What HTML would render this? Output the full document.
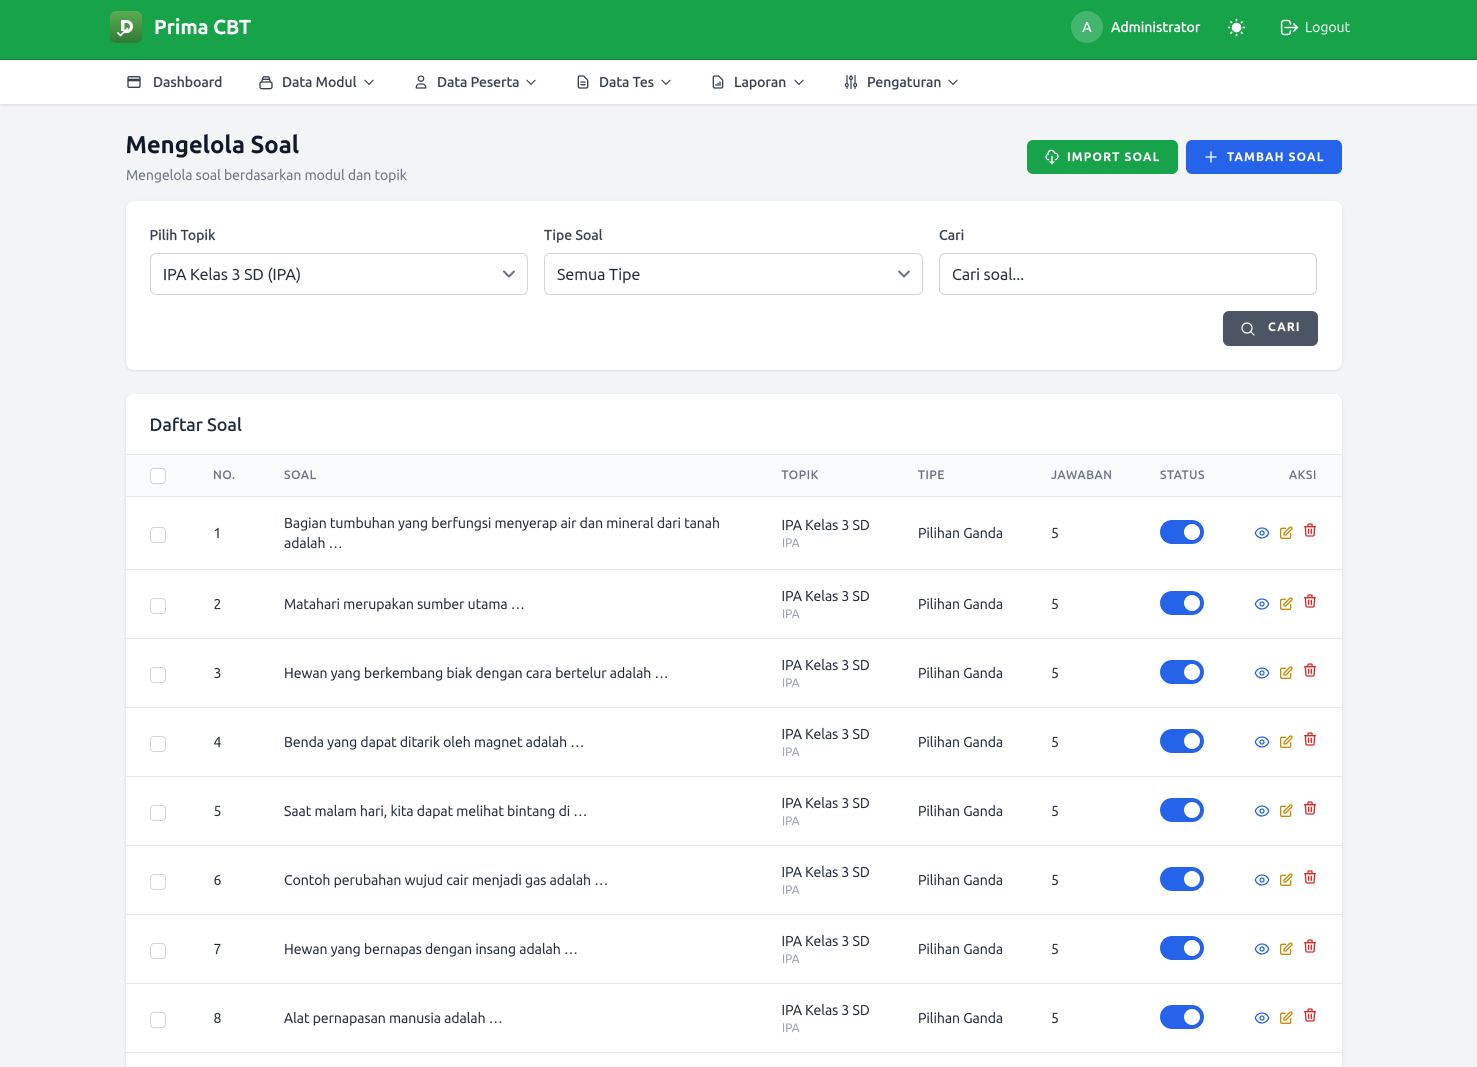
<!DOCTYPE html>
<html lang="id"><head><meta charset="utf-8"><title>Mengelola Soal</title>
<style>
*{box-sizing:border-box}
html,body{margin:0;padding:0;width:1477px;height:1067px;overflow:hidden;background:#f3f4f6;font-family:"Ubuntu","Liberation Sans",sans-serif;color:#1f2937}
#p{position:relative;width:1477px;height:1067px;overflow:hidden;background:#f3f4f6}
.a,.t,svg{position:absolute}
.t{white-space:nowrap;line-height:20px;font-size:14px;-webkit-text-stroke:.15px currentColor}
svg{fill:none;stroke:currentColor;stroke-width:2;stroke-linecap:round;stroke-linejoin:round;overflow:visible}
.nav{color:#374151}
.t.nav{font-weight:500}
.box{position:absolute;background:#fff;border:1px solid #d1d5db;border-radius:6px}
.cb{position:absolute;left:150px;width:16px;height:16px;border:1px solid #d1d5db;border-radius:4px;background:#fff}
.th{font-size:12px;color:#6b7280;letter-spacing:.6px;font-weight:500;top:466px}
.s{font-size:12px;color:#9ca3af}
.tg{position:absolute;left:1160px;width:44px;height:24px;border-radius:12px;background:#2563eb}
.tg:after{content:"";position:absolute;left:24px;top:4px;width:16px;height:16px;border-radius:50%;background:#fff}
.btn{position:absolute;border-radius:6px;color:#fff;font-weight:700;font-size:12px;letter-spacing:1.2px}
</style></head><body><div id="p">
<div class="a" style="left:0;top:0;width:1477px;height:60px;background:#16a34a;border-bottom:1px solid #15803d"></div>
<div class="a" style="left:110px;top:11px;width:32px;height:32px;border-radius:6px;background:linear-gradient(#5cae52,#2f7a35)"></div>
<svg style="left:110px;top:11px" width="32" height="32" viewBox="0 0 32 32"><path d="M11 10.500h5.500a5 5 0 0 1 0 10h-3" stroke="#fff" stroke-width="3" stroke-linecap="butt" stroke-linejoin="miter"/><path d="M12.800 9v11" stroke="#fff" stroke-width="3.400" stroke-linecap="butt"/><path d="M8 22l2.500 2.500 7-7" stroke="#fff" stroke-width="1.700"/></svg>
<div class="t" style="left:154px;top:17px;color:#fff;font-size:20px;font-weight:700">Prima CBT</div>
<div class="a" style="left:1071px;top:11px;width:32px;height:32px;border-radius:50%;background:rgba(255,255,255,.2);color:#fff;text-align:center;line-height:32px;font-size:14px;font-weight:500">A</div>
<div class="t" style="left:1111px;top:17px;color:#fff;font-weight:500">Administrator</div>
<svg style="left:1225.500px;top:16.500px;color:#fff" width="21" height="21" viewBox="0 0 24 24"><path d="M12 3v1m0 16v1m9-9h-1M4 12H3m15.364 6.364l-.707-.707M6.343 6.343l-.707-.707m12.728 0l-.707.707M6.343 17.657l-.707.707"/><circle cx="12" cy="12" r="4.500" fill="#fff"/></svg>
<svg style="left:1279px;top:16.500px;color:#fff;stroke-width:1.800" width="21" height="21" viewBox="0 0 24 24"><path d="M17 16l4-4m0 0l-4-4m4 4H7m6 4v1a3 3 0 01-3 3H6a3 3 0 01-3-3V7a3 3 0 013-3h4a3 3 0 013 3v1"/></svg>
<div class="t" style="left:1305px;top:17px;color:#fff;opacity:.9">Logout</div>

<div class="a" style="left:0;top:60px;width:1477px;height:44px;background:#fff;box-shadow:0 1px 3px rgba(0,0,0,.1)"></div>
<svg class="nav" style="left:126px;top:74px" width="16" height="16" viewBox="0 0 24 24"><rect x="3" y="4" width="18" height="16" rx="2"/><path d="M3 9h18" stroke-width="4" stroke-linecap="butt"/></svg>
<div class="t nav" style="left:153px;top:72px">Dashboard</div>
<svg class="nav" style="left:258px;top:74px" width="16" height="16" viewBox="0 0 24 24"><rect x="3" y="12" width="18" height="10" rx="2.500"/><path d="M5.500 12l2-7a1 1 0 0 1 1-.800h7a1 1 0 0 1 1 .800l2 7M7 8h10"/></svg>
<div class="t nav" style="left:282px;top:72px">Data Modul</div>
<svg class="nav" style="left:362px;top:75px" width="14" height="14" viewBox="0 0 24 24"><path d="M19 9l-7 7-7-7"/></svg>
<svg class="nav" style="left:413px;top:74px" width="16" height="16" viewBox="0 0 24 24"><circle cx="12" cy="7" r="4"/><path d="M5 21v-2a5 5 0 0 1 5-4h4a5 5 0 0 1 5 4v2z"/></svg>
<div class="t nav" style="left:437px;top:72px">Data Peserta</div>
<svg class="nav" style="left:524px;top:75px" width="14" height="14" viewBox="0 0 24 24"><path d="M19 9l-7 7-7-7"/></svg>
<svg class="nav" style="left:575px;top:74px" width="16" height="16" viewBox="0 0 24 24"><path d="M9 12h6m-6 4h6m2 5H7a2 2 0 01-2-2V5a2 2 0 012-2h5.586a1 1 0 01.707.293l5.414 5.414a1 1 0 01.293.707V19a2 2 0 01-2 2z"/></svg>
<div class="t nav" style="left:599px;top:72px">Data Tes</div>
<svg class="nav" style="left:659px;top:75px" width="14" height="14" viewBox="0 0 24 24"><path d="M19 9l-7 7-7-7"/></svg>
<svg class="nav" style="left:710px;top:74px" width="16" height="16" viewBox="0 0 24 24"><path d="M17 21H7a2 2 0 01-2-2V5a2 2 0 012-2h5.586a1 1 0 01.707.293l5.414 5.414a1 1 0 01.293.707V19a2 2 0 01-2 2z"/><path d="M9 17v-1m3 1v-3m3 3v-5"/></svg>
<div class="t nav" style="left:734px;top:72px">Laporan</div>
<svg class="nav" style="left:792px;top:75px" width="14" height="14" viewBox="0 0 24 24"><path d="M19 9l-7 7-7-7"/></svg>
<svg class="nav" style="left:845px;top:75px;stroke-width:1.200" width="12" height="14" viewBox="0 0 12 14"><path d="M2 .500v7.500M2 12v1.500M6 .500V1M6 5v8.500M10 .500V8M10 12v1.500"/><circle cx="1.800" cy="10" r="1.500"/><circle cx="6" cy="3" r="1.500"/><circle cx="10.200" cy="10" r="1.500"/></svg>
<div class="t nav" style="left:867px;top:72px">Pengaturan</div>
<svg class="nav" style="left:946px;top:75px" width="14" height="14" viewBox="0 0 24 24"><path d="M19 9l-7 7-7-7"/></svg>

<div class="t" style="left:125.500px;top:131px;line-height:28px;font-size:24px;font-weight:700;color:#111827">Mengelola Soal</div>
<div class="t" style="left:126px;top:165px;color:#6b7280">Mengelola soal berdasarkan modul dan topik</div>
<div class="btn" style="left:1027px;top:140px;width:151px;height:34px;background:#16a34a"></div>
<svg style="left:1044px;top:149px;color:#fff" width="16" height="16" viewBox="0 0 24 24"><path d="M7 16a4 4 0 01-.88-7.903A5 5 0 1115.900 6L16 6a5 5 0 011 9.900M12 11v11m-3-3l3 3 3-3"/></svg>
<div class="t btn" style="left:1067px;top:147.500px">IMPORT SOAL</div>
<div class="btn" style="left:1186px;top:140px;width:156px;height:34px;background:#2563eb"></div>
<svg style="left:1203px;top:149px;color:#fff" width="16" height="16" viewBox="0 0 24 24"><path d="M12 4.500v15m7.500-7.500h-15"/></svg>
<div class="t btn" style="left:1227px;top:147.500px">TAMBAH SOAL</div>

<div class="a" style="left:126px;top:201px;width:1216px;height:169px;background:#fff;border-radius:8px;box-shadow:0 1px 3px rgba(0,0,0,.1)"></div>
<div class="t" style="left:149.500px;top:225px;font-weight:500;color:#374151">Pilih Topik</div>
<div class="t" style="left:544px;top:225px;font-weight:500;color:#374151">Tipe Soal</div>
<div class="t" style="left:939px;top:225px;font-weight:500;color:#374151">Cari</div>
<div class="box" style="left:150px;top:253px;width:378px;height:42px"></div>
<div class="t" style="left:163px;top:264.500px;font-size:16px">IPA Kelas 3 SD (IPA)</div>
<svg style="left:503px;top:270px;color:#6b7280" width="12" height="8" viewBox="0 0 12 8"><path d="M1 1.500l5 5 5-5"/></svg>
<div class="box" style="left:544px;top:253px;width:379px;height:42px"></div>
<div class="t" style="left:557px;top:264.500px;font-size:16px">Semua Tipe</div>
<svg style="left:898px;top:270px;color:#6b7280" width="12" height="8" viewBox="0 0 12 8"><path d="M1 1.500l5 5 5-5"/></svg>
<div class="box" style="left:939px;top:253px;width:378px;height:42px"></div>
<div class="t" style="left:952px;top:264.500px;font-size:16px">Cari soal...</div>
<div class="btn" style="left:1223px;top:311px;width:95px;height:35px;background:#4b5563"></div>
<svg style="left:1240px;top:321px;color:#fff;stroke-width:1.800" width="16" height="16" viewBox="0 0 24 24"><path d="M21 21l-5.197-5.197m0 0A7.500 7.500 0 105.196 5.196a7.500 7.500 0 0010.607 10.607z"/></svg>
<div class="t btn" style="left:1268px;top:318px">CARI</div>

<div class="a" style="left:126px;top:394px;width:1216px;height:700px;background:#fff;border-radius:8px;box-shadow:0 1px 3px rgba(0,0,0,.1)"></div>
<div class="t" style="left:149.500px;top:414.500px;font-size:18px;font-weight:500;color:#1f2937">Daftar Soal</div>
<div class="a" style="left:126px;top:454px;width:1216px;height:43px;background:#f9fafb;border-top:1px solid #e5e7eb;border-bottom:1px solid #e5e7eb"></div>
<div class="cb" style="top:468px"></div>
<div class="t th" style="left:213px">NO.</div>
<div class="t th" style="left:284px">SOAL</div>
<div class="t th" style="left:781.500px">TOPIK</div>
<div class="t th" style="left:918px">TIPE</div>
<div class="t th" style="left:1051px">JAWABAN</div>
<div class="t th" style="left:1160px">STATUS</div>
<div class="t th" style="left:1289px">AKSI</div>

<!-- row 1 -->
<div class="a" style="left:126px;top:569px;width:1216px;height:1px;background:#e5e7eb"></div>
<div class="cb" style="top:527px"></div>
<div class="t" style="left:213.500px;top:523px">1</div>
<div class="t" style="left:284px;top:513px">Bagian tumbuhan yang berfungsi menyerap air dan mineral dari tanah</div>
<div class="t" style="left:284px;top:533px">adalah …</div>
<div class="t" style="left:781.500px;top:515px">IPA Kelas 3 SD</div>
<div class="t s" style="left:782px;top:534px">IPA</div>
<div class="t" style="left:918px;top:523px">Pilihan Ganda</div>
<div class="t" style="left:1051px;top:523px">5</div>
<div class="tg" style="top:520px"></div>
<svg style="left:1254px;top:525px;color:#2563eb" width="16" height="16" viewBox="0 0 24 24"><path d="M2.036 12.322a1.012 1.012 0 010-.639C3.423 7.510 7.360 4.500 12 4.500c4.638 0 8.573 3.007 9.963 7.178.07.207.07.431 0 .639C20.577 16.490 16.640 19.500 12 19.500c-4.638 0-8.573-3.007-9.963-7.178z"/><path d="M15 12a3 3 0 11-6 0 3 3 0 016 0z"/></svg>
<svg style="left:1278px;top:525px;color:#ca8a04" width="16" height="16" viewBox="0 0 24 24"><path d="M11 5H6a2 2 0 00-2 2v11a2 2 0 002 2h11a2 2 0 002-2v-5m-1.414-9.414a2 2 0 112.828 2.828L11.828 15H9v-2.828l8.586-8.586z"/></svg>
<svg style="left:1302px;top:522px;color:#dc2626" width="16" height="16" viewBox="0 0 24 24"><path d="M19 7l-.867 12.142A2 2 0 0116.138 21H7.862a2 2 0 01-1.995-1.858L5 7m5 4v6m4-6v6m1-10V4a1 1 0 00-1-1h-4a1 1 0 00-1 1v3M4 7h16"/></svg>

<!-- row 2 -->
<div class="a" style="left:126px;top:638px;width:1216px;height:1px;background:#e5e7eb"></div>
<div class="cb" style="top:598px"></div>
<div class="t" style="left:213.500px;top:594px">2</div>
<div class="t" style="left:284px;top:594px">Matahari merupakan sumber utama …</div>
<div class="t" style="left:781.500px;top:586px">IPA Kelas 3 SD</div>
<div class="t s" style="left:782px;top:605px">IPA</div>
<div class="t" style="left:918px;top:594px">Pilihan Ganda</div>
<div class="t" style="left:1051px;top:594px">5</div>
<div class="tg" style="top:591px"></div>
<svg style="left:1254px;top:596px;color:#2563eb" width="16" height="16" viewBox="0 0 24 24"><path d="M2.036 12.322a1.012 1.012 0 010-.639C3.423 7.510 7.360 4.500 12 4.500c4.638 0 8.573 3.007 9.963 7.178.07.207.07.431 0 .639C20.577 16.490 16.640 19.500 12 19.500c-4.638 0-8.573-3.007-9.963-7.178z"/><path d="M15 12a3 3 0 11-6 0 3 3 0 016 0z"/></svg>
<svg style="left:1278px;top:596px;color:#ca8a04" width="16" height="16" viewBox="0 0 24 24"><path d="M11 5H6a2 2 0 00-2 2v11a2 2 0 002 2h11a2 2 0 002-2v-5m-1.414-9.414a2 2 0 112.828 2.828L11.828 15H9v-2.828l8.586-8.586z"/></svg>
<svg style="left:1302px;top:593px;color:#dc2626" width="16" height="16" viewBox="0 0 24 24"><path d="M19 7l-.867 12.142A2 2 0 0116.138 21H7.862a2 2 0 01-1.995-1.858L5 7m5 4v6m4-6v6m1-10V4a1 1 0 00-1-1h-4a1 1 0 00-1 1v3M4 7h16"/></svg>

<!-- row 3 -->
<div class="a" style="left:126px;top:707px;width:1216px;height:1px;background:#e5e7eb"></div>
<div class="cb" style="top:667px"></div>
<div class="t" style="left:213.500px;top:663px">3</div>
<div class="t" style="left:284px;top:663px">Hewan yang berkembang biak dengan cara bertelur adalah …</div>
<div class="t" style="left:781.500px;top:655px">IPA Kelas 3 SD</div>
<div class="t s" style="left:782px;top:674px">IPA</div>
<div class="t" style="left:918px;top:663px">Pilihan Ganda</div>
<div class="t" style="left:1051px;top:663px">5</div>
<div class="tg" style="top:660px"></div>
<svg style="left:1254px;top:665px;color:#2563eb" width="16" height="16" viewBox="0 0 24 24"><path d="M2.036 12.322a1.012 1.012 0 010-.639C3.423 7.510 7.360 4.500 12 4.500c4.638 0 8.573 3.007 9.963 7.178.07.207.07.431 0 .639C20.577 16.490 16.640 19.500 12 19.500c-4.638 0-8.573-3.007-9.963-7.178z"/><path d="M15 12a3 3 0 11-6 0 3 3 0 016 0z"/></svg>
<svg style="left:1278px;top:665px;color:#ca8a04" width="16" height="16" viewBox="0 0 24 24"><path d="M11 5H6a2 2 0 00-2 2v11a2 2 0 002 2h11a2 2 0 002-2v-5m-1.414-9.414a2 2 0 112.828 2.828L11.828 15H9v-2.828l8.586-8.586z"/></svg>
<svg style="left:1302px;top:662px;color:#dc2626" width="16" height="16" viewBox="0 0 24 24"><path d="M19 7l-.867 12.142A2 2 0 0116.138 21H7.862a2 2 0 01-1.995-1.858L5 7m5 4v6m4-6v6m1-10V4a1 1 0 00-1-1h-4a1 1 0 00-1 1v3M4 7h16"/></svg>

<!-- row 4 -->
<div class="a" style="left:126px;top:776px;width:1216px;height:1px;background:#e5e7eb"></div>
<div class="cb" style="top:736px"></div>
<div class="t" style="left:213.500px;top:732px">4</div>
<div class="t" style="left:284px;top:732px">Benda yang dapat ditarik oleh magnet adalah …</div>
<div class="t" style="left:781.500px;top:724px">IPA Kelas 3 SD</div>
<div class="t s" style="left:782px;top:743px">IPA</div>
<div class="t" style="left:918px;top:732px">Pilihan Ganda</div>
<div class="t" style="left:1051px;top:732px">5</div>
<div class="tg" style="top:729px"></div>
<svg style="left:1254px;top:734px;color:#2563eb" width="16" height="16" viewBox="0 0 24 24"><path d="M2.036 12.322a1.012 1.012 0 010-.639C3.423 7.510 7.360 4.500 12 4.500c4.638 0 8.573 3.007 9.963 7.178.07.207.07.431 0 .639C20.577 16.490 16.640 19.500 12 19.500c-4.638 0-8.573-3.007-9.963-7.178z"/><path d="M15 12a3 3 0 11-6 0 3 3 0 016 0z"/></svg>
<svg style="left:1278px;top:734px;color:#ca8a04" width="16" height="16" viewBox="0 0 24 24"><path d="M11 5H6a2 2 0 00-2 2v11a2 2 0 002 2h11a2 2 0 002-2v-5m-1.414-9.414a2 2 0 112.828 2.828L11.828 15H9v-2.828l8.586-8.586z"/></svg>
<svg style="left:1302px;top:731px;color:#dc2626" width="16" height="16" viewBox="0 0 24 24"><path d="M19 7l-.867 12.142A2 2 0 0116.138 21H7.862a2 2 0 01-1.995-1.858L5 7m5 4v6m4-6v6m1-10V4a1 1 0 00-1-1h-4a1 1 0 00-1 1v3M4 7h16"/></svg>

<!-- row 5 -->
<div class="a" style="left:126px;top:845px;width:1216px;height:1px;background:#e5e7eb"></div>
<div class="cb" style="top:805px"></div>
<div class="t" style="left:213.500px;top:801px">5</div>
<div class="t" style="left:284px;top:801px">Saat malam hari, kita dapat melihat bintang di …</div>
<div class="t" style="left:781.500px;top:793px">IPA Kelas 3 SD</div>
<div class="t s" style="left:782px;top:812px">IPA</div>
<div class="t" style="left:918px;top:801px">Pilihan Ganda</div>
<div class="t" style="left:1051px;top:801px">5</div>
<div class="tg" style="top:798px"></div>
<svg style="left:1254px;top:803px;color:#2563eb" width="16" height="16" viewBox="0 0 24 24"><path d="M2.036 12.322a1.012 1.012 0 010-.639C3.423 7.510 7.360 4.500 12 4.500c4.638 0 8.573 3.007 9.963 7.178.07.207.07.431 0 .639C20.577 16.490 16.640 19.500 12 19.500c-4.638 0-8.573-3.007-9.963-7.178z"/><path d="M15 12a3 3 0 11-6 0 3 3 0 016 0z"/></svg>
<svg style="left:1278px;top:803px;color:#ca8a04" width="16" height="16" viewBox="0 0 24 24"><path d="M11 5H6a2 2 0 00-2 2v11a2 2 0 002 2h11a2 2 0 002-2v-5m-1.414-9.414a2 2 0 112.828 2.828L11.828 15H9v-2.828l8.586-8.586z"/></svg>
<svg style="left:1302px;top:800px;color:#dc2626" width="16" height="16" viewBox="0 0 24 24"><path d="M19 7l-.867 12.142A2 2 0 0116.138 21H7.862a2 2 0 01-1.995-1.858L5 7m5 4v6m4-6v6m1-10V4a1 1 0 00-1-1h-4a1 1 0 00-1 1v3M4 7h16"/></svg>

<!-- row 6 -->
<div class="a" style="left:126px;top:914px;width:1216px;height:1px;background:#e5e7eb"></div>
<div class="cb" style="top:874px"></div>
<div class="t" style="left:213.500px;top:870px">6</div>
<div class="t" style="left:284px;top:870px">Contoh perubahan wujud cair menjadi gas adalah …</div>
<div class="t" style="left:781.500px;top:862px">IPA Kelas 3 SD</div>
<div class="t s" style="left:782px;top:881px">IPA</div>
<div class="t" style="left:918px;top:870px">Pilihan Ganda</div>
<div class="t" style="left:1051px;top:870px">5</div>
<div class="tg" style="top:867px"></div>
<svg style="left:1254px;top:872px;color:#2563eb" width="16" height="16" viewBox="0 0 24 24"><path d="M2.036 12.322a1.012 1.012 0 010-.639C3.423 7.510 7.360 4.500 12 4.500c4.638 0 8.573 3.007 9.963 7.178.07.207.07.431 0 .639C20.577 16.490 16.640 19.500 12 19.500c-4.638 0-8.573-3.007-9.963-7.178z"/><path d="M15 12a3 3 0 11-6 0 3 3 0 016 0z"/></svg>
<svg style="left:1278px;top:872px;color:#ca8a04" width="16" height="16" viewBox="0 0 24 24"><path d="M11 5H6a2 2 0 00-2 2v11a2 2 0 002 2h11a2 2 0 002-2v-5m-1.414-9.414a2 2 0 112.828 2.828L11.828 15H9v-2.828l8.586-8.586z"/></svg>
<svg style="left:1302px;top:869px;color:#dc2626" width="16" height="16" viewBox="0 0 24 24"><path d="M19 7l-.867 12.142A2 2 0 0116.138 21H7.862a2 2 0 01-1.995-1.858L5 7m5 4v6m4-6v6m1-10V4a1 1 0 00-1-1h-4a1 1 0 00-1 1v3M4 7h16"/></svg>

<!-- row 7 -->
<div class="a" style="left:126px;top:983px;width:1216px;height:1px;background:#e5e7eb"></div>
<div class="cb" style="top:943px"></div>
<div class="t" style="left:213.500px;top:939px">7</div>
<div class="t" style="left:284px;top:939px">Hewan yang bernapas dengan insang adalah …</div>
<div class="t" style="left:781.500px;top:931px">IPA Kelas 3 SD</div>
<div class="t s" style="left:782px;top:950px">IPA</div>
<div class="t" style="left:918px;top:939px">Pilihan Ganda</div>
<div class="t" style="left:1051px;top:939px">5</div>
<div class="tg" style="top:936px"></div>
<svg style="left:1254px;top:941px;color:#2563eb" width="16" height="16" viewBox="0 0 24 24"><path d="M2.036 12.322a1.012 1.012 0 010-.639C3.423 7.510 7.360 4.500 12 4.500c4.638 0 8.573 3.007 9.963 7.178.07.207.07.431 0 .639C20.577 16.490 16.640 19.500 12 19.500c-4.638 0-8.573-3.007-9.963-7.178z"/><path d="M15 12a3 3 0 11-6 0 3 3 0 016 0z"/></svg>
<svg style="left:1278px;top:941px;color:#ca8a04" width="16" height="16" viewBox="0 0 24 24"><path d="M11 5H6a2 2 0 00-2 2v11a2 2 0 002 2h11a2 2 0 002-2v-5m-1.414-9.414a2 2 0 112.828 2.828L11.828 15H9v-2.828l8.586-8.586z"/></svg>
<svg style="left:1302px;top:938px;color:#dc2626" width="16" height="16" viewBox="0 0 24 24"><path d="M19 7l-.867 12.142A2 2 0 0116.138 21H7.862a2 2 0 01-1.995-1.858L5 7m5 4v6m4-6v6m1-10V4a1 1 0 00-1-1h-4a1 1 0 00-1 1v3M4 7h16"/></svg>

<!-- row 8 -->
<div class="a" style="left:126px;top:1052px;width:1216px;height:1px;background:#e5e7eb"></div>
<div class="cb" style="top:1012px"></div>
<div class="t" style="left:213.500px;top:1008px">8</div>
<div class="t" style="left:284px;top:1008px">Alat pernapasan manusia adalah …</div>
<div class="t" style="left:781.500px;top:1000px">IPA Kelas 3 SD</div>
<div class="t s" style="left:782px;top:1019px">IPA</div>
<div class="t" style="left:918px;top:1008px">Pilihan Ganda</div>
<div class="t" style="left:1051px;top:1008px">5</div>
<div class="tg" style="top:1005px"></div>
<svg style="left:1254px;top:1010px;color:#2563eb" width="16" height="16" viewBox="0 0 24 24"><path d="M2.036 12.322a1.012 1.012 0 010-.639C3.423 7.510 7.360 4.500 12 4.500c4.638 0 8.573 3.007 9.963 7.178.07.207.07.431 0 .639C20.577 16.490 16.640 19.500 12 19.500c-4.638 0-8.573-3.007-9.963-7.178z"/><path d="M15 12a3 3 0 11-6 0 3 3 0 016 0z"/></svg>
<svg style="left:1278px;top:1010px;color:#ca8a04" width="16" height="16" viewBox="0 0 24 24"><path d="M11 5H6a2 2 0 00-2 2v11a2 2 0 002 2h11a2 2 0 002-2v-5m-1.414-9.414a2 2 0 112.828 2.828L11.828 15H9v-2.828l8.586-8.586z"/></svg>
<svg style="left:1302px;top:1007px;color:#dc2626" width="16" height="16" viewBox="0 0 24 24"><path d="M19 7l-.867 12.142A2 2 0 0116.138 21H7.862a2 2 0 01-1.995-1.858L5 7m5 4v6m4-6v6m1-10V4a1 1 0 00-1-1h-4a1 1 0 00-1 1v3M4 7h16"/></svg>
</div></body></html>
